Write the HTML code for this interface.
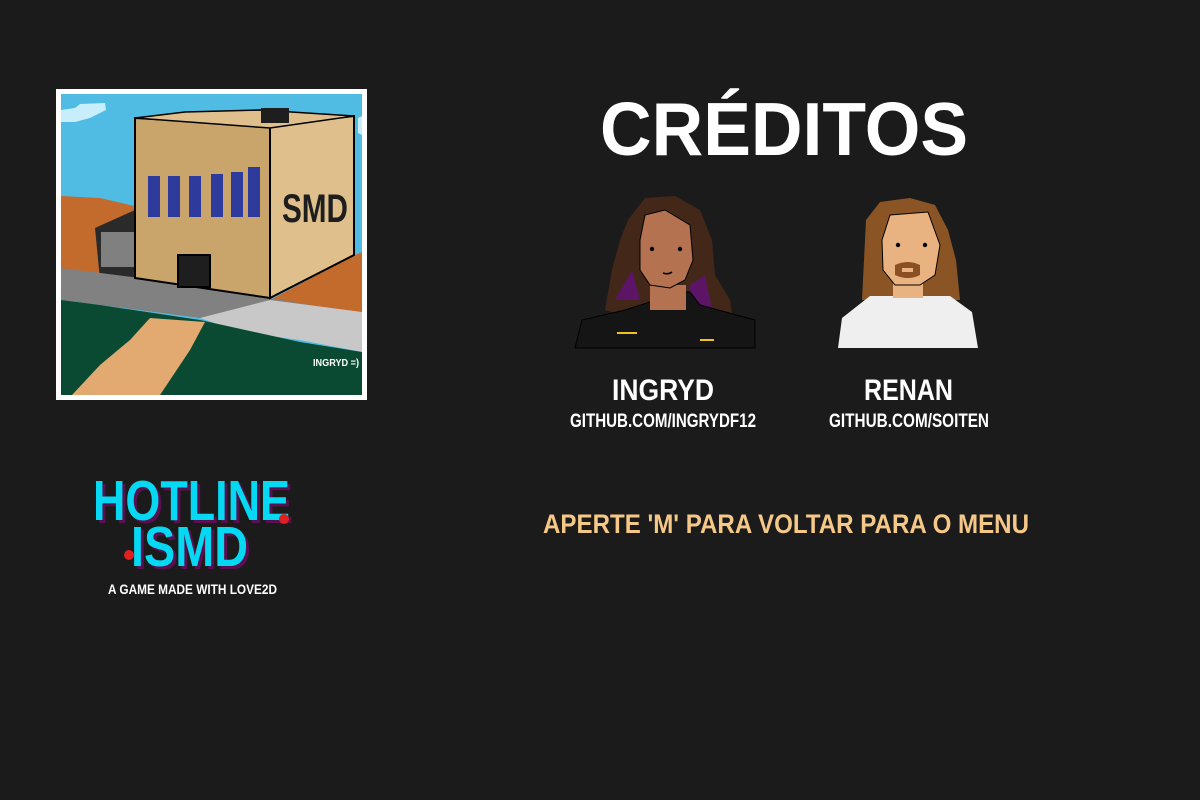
<!DOCTYPE html>
<html><head><meta charset="utf-8"><style>
html,body{margin:0;padding:0;background:#1b1b1b;width:1200px;height:800px;overflow:hidden}
svg{display:block}
text{font-family:"Liberation Sans",sans-serif;font-weight:bold}
</style></head><body>
<svg width="1200" height="800" viewBox="0 0 1200 800" xmlns="http://www.w3.org/2000/svg">
<rect width="1200" height="800" fill="#1b1b1b"/>
<rect x="56" y="89" width="311" height="311" fill="#fff"/>
<rect x="61" y="94" width="301" height="301" fill="#50bce4"/>
<polygon points="61,110 75,108 80,104 105,103 106,110 90,118 75,122 61,122" fill="#c8eefc"/>
<polygon points="358,118 362,116 362,135 358,133" fill="#c8eefc"/>
<polygon points="61,196 100,198 130,205 150,210 150,280 61,280" fill="#c36a2d"/>
<polygon points="270,300 355,255 362,252 362,314 280,300" fill="#c36a2d"/>
<polygon points="95,228 135,210 150,208 150,280 100,280" fill="#2a2a2a"/>
<rect x="101" y="232" width="34" height="35" fill="#808080"/>
<polygon points="61,268 140,278 270,298 362,314 362,340 310,330 200,318 100,305 61,300" fill="#818181"/>
<polygon points="200,318 270,300 362,312 362,352 300,340 240,332" fill="#c8c8c8"/>
<polygon points="61,300 100,305 200,320 300,342 362,352 362,395 61,395" fill="#0a4a32"/>
<polygon points="150,318 205,322 190,350 170,380 160,395 72,395 100,365 130,340" fill="#e2a970"/>
<polygon points="135,118 270,125 270,298 135,278" fill="#c9a56c" stroke="#000" stroke-width="2"/>
<polygon points="270,125 354,116 354,255 270,298" fill="#dfc08c" stroke="#000" stroke-width="2"/>
<polygon points="135,118 185,112 260,110 354,116 270,128" fill="#dfc08c" stroke="#000" stroke-width="1.5"/>
<rect x="261" y="108" width="28" height="15" fill="#1e1e1e"/>
<rect x="178" y="255" width="32" height="32" fill="#1e1e1e" stroke="#000" stroke-width="2"/>
<g fill="#2e3a9c"><rect x="148" y="176" width="12" height="41"/><rect x="168" y="176" width="12" height="41"/><rect x="189" y="176" width="12" height="41"/><rect x="211" y="174" width="12" height="43"/><rect x="231" y="172" width="12" height="45"/><rect x="248" y="167" width="12" height="50"/></g>
<text x="282" y="222" font-size="40" fill="#1e1e1e" textLength="66" lengthAdjust="spacingAndGlyphs">SMD</text>
<text x="313" y="366" font-size="10" fill="#fff" textLength="46" lengthAdjust="spacingAndGlyphs">INGRYD =)</text>
<text x="600" y="155" font-size="75" fill="#fff" textLength="368" lengthAdjust="spacingAndGlyphs">CRÉDITOS</text>
<polygon points="628,220 645,198 675,196 700,210 712,240 715,275 730,300 732,315 700,320 640,320 605,310 612,270 620,240" fill="#43281a"/>
<polygon points="615,300 632,270 640,300" fill="#5b1466"/>
<polygon points="690,285 705,275 712,310 690,305" fill="#5b1466"/>
<polygon points="575,348 582,320 625,310 650,302 660,290 690,292 700,305 755,320 755,348" fill="#151515" stroke="#000" stroke-width="1"/>
<rect x="650" y="285" width="36" height="25" fill="#b47250"/>
<polygon points="640,240 645,215 665,210 690,225 693,260 685,280 670,288 650,285 640,270" fill="#b47250" stroke="#000" stroke-width="1"/>
<circle cx="652" cy="249" r="2.2" fill="#000"/><circle cx="680" cy="249" r="2.2" fill="#000"/>
<path d="M663 273 q5 2 9 -1" stroke="#000" fill="none" stroke-width="1.5"/>
<path d="M617 333h20M700 340h14" stroke="#f0c020" stroke-width="2"/>
<polygon points="866,220 880,202 910,198 935,205 948,230 956,260 960,300 940,300 880,300 862,300 864,260" fill="#8a5424"/>
<polygon points="838,348 842,318 870,296 950,296 972,312 978,348" fill="#efefef"/>
<rect x="893" y="280" width="30" height="18" fill="#e8b380"/>
<polygon points="882,240 890,215 928,212 940,245 935,275 920,285 895,285 883,270" fill="#e8b380" stroke="#000" stroke-width="1"/>
<circle cx="898" cy="245" r="2.2" fill="#000"/><circle cx="925" cy="245" r="2.2" fill="#000"/>
<path d="M895 265 q13 -6 25 0 l0 10 q-12 6 -25 0z" fill="#8a4f22"/>
<rect x="902" y="268" width="11" height="4" fill="#e8b380"/>
<text x="612" y="400" font-size="30" fill="#fff" textLength="102" lengthAdjust="spacingAndGlyphs">INGRYD</text>
<text x="864" y="400" font-size="30" fill="#fff" textLength="89" lengthAdjust="spacingAndGlyphs">RENAN</text>
<text x="570" y="427" font-size="19" fill="#fff" textLength="186" lengthAdjust="spacingAndGlyphs">GITHUB.COM/INGRYDF12</text>
<text x="829" y="427" font-size="19" fill="#fff" textLength="160" lengthAdjust="spacingAndGlyphs">GITHUB.COM/SOITEN</text>
<text x="543" y="533" font-size="27" fill="#f6c887" textLength="486" lengthAdjust="spacingAndGlyphs">APERTE 'M' PARA VOLTAR PARA O MENU</text>
<text x="96" y="523" font-size="57" fill="#5a1050" textLength="197" lengthAdjust="spacingAndGlyphs">HOTLINE</text>
<text x="93" y="520" font-size="57" fill="#05d8f2" textLength="197" lengthAdjust="spacingAndGlyphs">HOTLINE</text>
<text x="134" y="569" font-size="57" fill="#5a1050" textLength="117" lengthAdjust="spacingAndGlyphs">ISMD</text>
<text x="131" y="566" font-size="57" fill="#05d8f2" textLength="117" lengthAdjust="spacingAndGlyphs">ISMD</text>
<circle cx="284" cy="519" r="5" fill="#e02020"/><circle cx="129" cy="555" r="5" fill="#e02020"/>
<text x="108" y="594" font-size="14" fill="#fff" textLength="169" lengthAdjust="spacingAndGlyphs">A GAME MADE WITH LOVE2D</text>
</svg>
</body></html>
